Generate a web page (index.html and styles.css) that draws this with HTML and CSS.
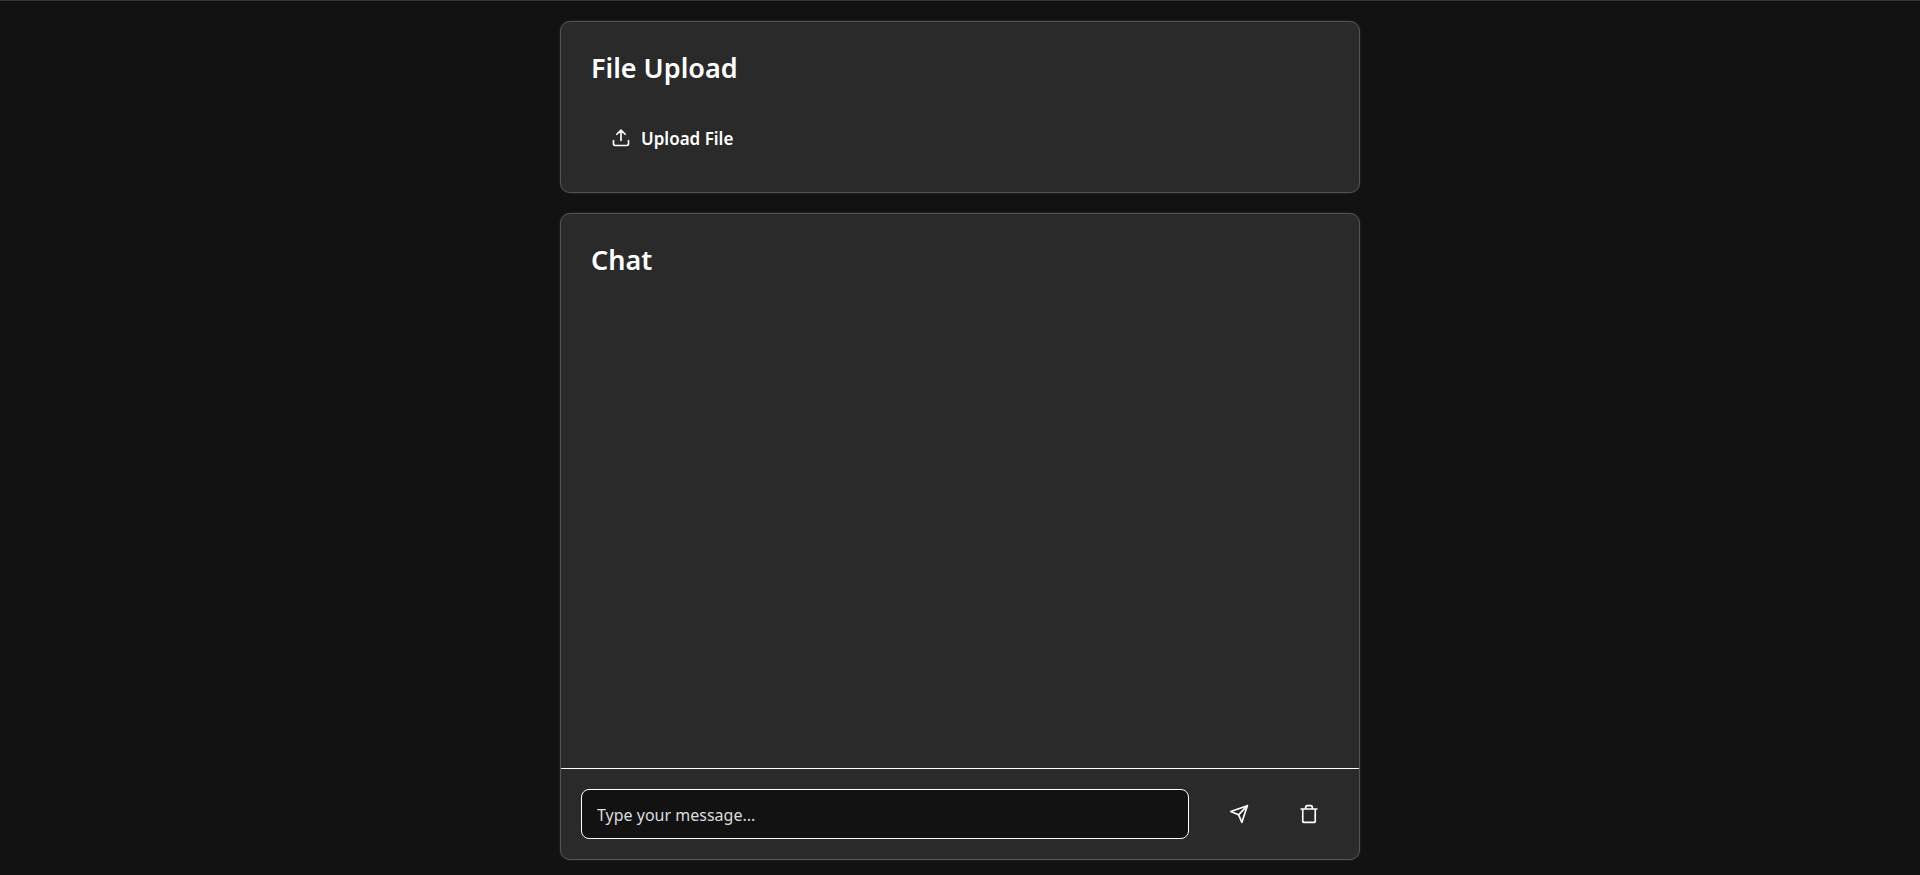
FILE: index.html
```html
<!DOCTYPE html>
<html lang="en">
<head>
<meta charset="utf-8">
<meta name="viewport" content="width=device-width, initial-scale=1">
<title>Chat</title>
<link rel="stylesheet" href="styles.css">
</head>
<body class="page">
<main class="container">
  <section class="card card-upload">
    <h2 class="card-title">File Upload</h2>
    <button class="button" type="button">
      <svg class="icon" viewBox="0 0 24 24" aria-hidden="true"><path d="M3 15v4a2 2 0 0 0 2 2h14a2 2 0 0 0 2-2V15M12 15V3M7 7.500l5-5 5 5"/></svg>
      Upload File
    </button>
  </section>
  <section class="card card-chat">
    <h2 class="card-title">Chat</h2>
    <div class="messages"></div>
    <form class="composer">
      <input class="message-input" type="text" placeholder="Type your message..." aria-label="Message">
      <div class="actions">
        <button class="button" type="button" aria-label="Send message">
          <svg class="icon icon-action" viewBox="0 0 24 24" aria-hidden="true"><path d="M22 2L2 9l9.500 4L15.500 22z"/><path d="M22 2L11.500 13"/></svg>
        </button>
        <button class="button" type="button" aria-label="Clear chat">
          <svg class="icon icon-action" viewBox="0 0 24 24" aria-hidden="true"><path d="M2.500 6h19M4.500 6v15a1 1 0 0 0 1 1h13a1 1 0 0 0 1-1V6M8 6V4a2 2 0 0 1 2-2h4a2 2 0 0 1 2 2v2"/></svg>
        </button>
      </div>
    </form>
  </section>
</main>
</body>
</html>
```
FILE: styles.css
```css
*, *::before, *::after { box-sizing: border-box; }

.page {
  margin: 0;
  min-height: 100vh;
  display: flex;
  flex-direction: column;
  border-top: 1px solid #333;
  background: #121212;
  color: #fff;
  font-family: "Segoe UI", "Noto Sans", sans-serif;
  font-size: 16px;
}

.container {
  flex: 1;
  display: flex;
  flex-direction: column;
  gap: 20px;
  width: 100%;
  max-width: 800px;
  margin: 0 auto;
  padding: 20px 0 15px;
}

.card {
  border: 1px solid #555;
  border-radius: 10px;
  background: #2a2a2a;
  box-shadow: 0 0 2px rgba(255, 255, 255, 0.15);
}

.card-upload { padding: 0 30px 29px; }

.card-chat {
  flex: 1;
  display: flex;
  flex-direction: column;
}

.card-chat .card-title { padding-left: 30px; }

.card-title {
  margin: 0;
  padding: 25px 0 24px;
  font-size: 27px;
  font-weight: 600;
  line-height: 42px;
}

.messages { flex: 1; }

.composer {
  display: flex;
  gap: 20px;
  padding: 20px;
  border-top: 1px solid #fff;
}

.message-input {
  flex: 1;
  min-width: 0;
  height: 50px;
  padding: 2px 15px 0;
  border: 1px solid #fff;
  border-radius: 8px;
  background: #121212;
  color: #fff;
  font: inherit;
}

.message-input::placeholder { color: #ddd; opacity: 1; }

.actions { display: flex; gap: 10px; }

.button {
  display: inline-flex;
  align-items: center;
  gap: 10px;
  height: 50px;
  padding: 0 20px;
  border: 0;
  background: transparent;
  color: inherit;
  font: inherit;
  font-size: 17px;
  font-weight: 600;
  cursor: pointer;
}

.icon {
  width: 20px;
  height: 20px;
  fill: none;
  stroke: currentColor;
  stroke-width: 2;
  stroke-linecap: round;
  stroke-linejoin: round;
}
```
